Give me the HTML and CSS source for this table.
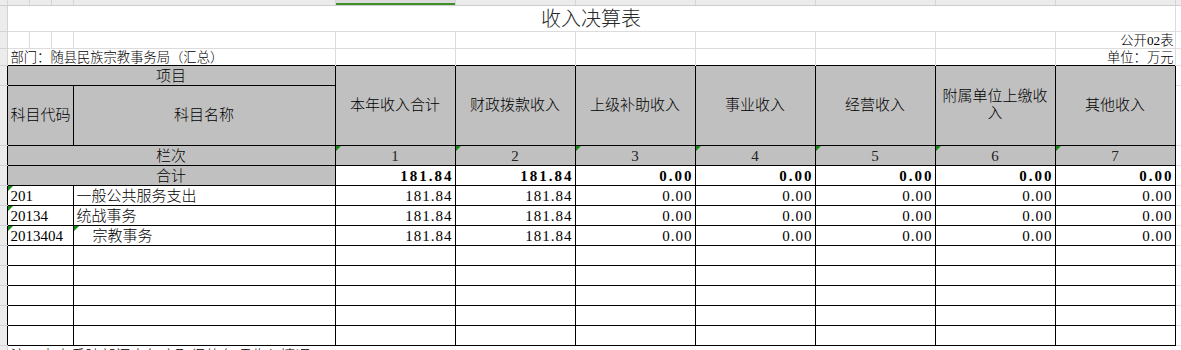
FILE: index.html
```html
<!DOCTYPE html>
<html lang="zh-CN">
<head>
<meta charset="utf-8">
<title>收入决算表</title>
<link rel="stylesheet" href="styles.css">
</head>
<body>
<table class="sheet">
<colgroup>
<col class="c-rh"><col class="c-s"><col class="c-s"><col class="c-s"><col class="c-d">
<col class="c-n"><col class="c-n"><col class="c-n"><col class="c-n"><col class="c-n"><col class="c-n"><col class="c-n">
<col class="c-gut">
</colgroup>
<tbody>
<tr class="r-top">
<td class="hd"></td><td class="hd"></td><td class="hd"></td><td class="hd"></td><td class="hd"></td>
<td class="hd active"></td><td class="hd"></td><td class="hd"></td><td class="hd"></td><td class="hd"></td><td class="hd"></td><td class="hd"></td>
<td class="hd"></td>
</tr>
<tr class="r-title">
<td class="rh"></td><td class="g title" colspan="11">收入决算表</td><td class="gut"></td>
</tr>
<tr class="r-info">
<td class="rh"></td><td class="g"></td><td class="g"></td><td class="g"></td><td class="g"></td>
<td class="g"></td><td class="g"></td><td class="g"></td><td class="g"></td><td class="g"></td><td class="g"></td>
<td class="g info">公开02表</td><td class="gut"></td>
</tr>
<tr class="r-info">
<td class="rh"></td><td class="g nb info dept" colspan="4">部门：随县民族宗教事务局（汇总）</td>
<td class="g nb"></td><td class="g nb"></td><td class="g nb"></td><td class="g nb"></td><td class="g nb"></td><td class="g nb"></td>
<td class="g nb info">单位：万元</td><td class="gut"></td>
</tr>
<tr class="r-h1">
<td class="rh in"></td><td class="t h c" colspan="4">项目</td>
<td class="t h c mid wrap" rowspan="2">本年收入合计</td>
<td class="t h c mid wrap" rowspan="2">财政拨款收入</td>
<td class="t h c mid wrap" rowspan="2">上级补助收入</td>
<td class="t h c mid wrap" rowspan="2">事业收入</td>
<td class="t h c mid wrap" rowspan="2">经营收入</td>
<td class="t h c mid wrap" rowspan="2">附属单位上缴收入</td>
<td class="t h c mid wrap" rowspan="2">其他收入</td>
<td class="gut"></td>
</tr>
<tr class="r-h2">
<td class="rh in"></td><td class="t h c mid" colspan="3">科目代码</td><td class="t h c mid">科目名称</td><td class="gut"></td>
</tr>
<tr class="r">
<td class="rh in"></td><td class="t h c" colspan="4">栏次</td>
<td class="t h c num tri">1</td><td class="t h c num tri">2</td><td class="t h c num tri">3</td><td class="t h c num tri">4</td>
<td class="t h c num tri">5</td><td class="t h c num tri">6</td><td class="t h c num tri">7</td><td class="gut"></td>
</tr>
<tr class="r">
<td class="rh in"></td><td class="t h c" colspan="4">合计</td>
<td class="t n b">181.84</td><td class="t n b">181.84</td><td class="t n b">0.00</td><td class="t n b">0.00</td>
<td class="t n b">0.00</td><td class="t n b">0.00</td><td class="t n b">0.00</td><td class="gut"></td>
</tr>
<tr class="r">
<td class="rh in"></td><td class="t code tri" colspan="3">201</td><td class="t name">一般公共服务支出</td>
<td class="t n">181.84</td><td class="t n">181.84</td><td class="t n">0.00</td><td class="t n">0.00</td>
<td class="t n">0.00</td><td class="t n">0.00</td><td class="t n">0.00</td><td class="gut"></td>
</tr>
<tr class="r">
<td class="rh in"></td><td class="t code tri" colspan="3">20134</td><td class="t name">统战事务</td>
<td class="t n">181.84</td><td class="t n">181.84</td><td class="t n">0.00</td><td class="t n">0.00</td>
<td class="t n">0.00</td><td class="t n">0.00</td><td class="t n">0.00</td><td class="gut"></td>
</tr>
<tr class="r">
<td class="rh in"></td><td class="t code tri" colspan="3">2013404</td><td class="t name sub tri">宗教事务</td>
<td class="t n">181.84</td><td class="t n">181.84</td><td class="t n">0.00</td><td class="t n">0.00</td>
<td class="t n">0.00</td><td class="t n">0.00</td><td class="t n">0.00</td><td class="gut"></td>
</tr>
<tr class="r">
<td class="rh in"></td><td class="t" colspan="3"></td><td class="t"></td>
<td class="t"></td><td class="t"></td><td class="t"></td><td class="t"></td><td class="t"></td><td class="t"></td><td class="t"></td><td class="gut"></td>
</tr>
<tr class="r">
<td class="rh in"></td><td class="t" colspan="3"></td><td class="t"></td>
<td class="t"></td><td class="t"></td><td class="t"></td><td class="t"></td><td class="t"></td><td class="t"></td><td class="t"></td><td class="gut"></td>
</tr>
<tr class="r">
<td class="rh in"></td><td class="t" colspan="3"></td><td class="t"></td>
<td class="t"></td><td class="t"></td><td class="t"></td><td class="t"></td><td class="t"></td><td class="t"></td><td class="t"></td><td class="gut"></td>
</tr>
<tr class="r">
<td class="rh in"></td><td class="t" colspan="3"></td><td class="t"></td>
<td class="t"></td><td class="t"></td><td class="t"></td><td class="t"></td><td class="t"></td><td class="t"></td><td class="t"></td><td class="gut"></td>
</tr>
<tr class="r">
<td class="rh in"></td><td class="t" colspan="3"></td><td class="t"></td>
<td class="t"></td><td class="t"></td><td class="t"></td><td class="t"></td><td class="t"></td><td class="t"></td><td class="t"></td><td class="gut"></td>
</tr>
<tr class="r">
<td class="rh"></td><td class="g note" colspan="11">注：本表反映部门本年度取得的各项收入情况。</td><td class="gut"></td>
</tr>
</tbody>
</table>
</body>
</html>
```

FILE: styles.css
```css
html, body {
  margin: 0;
  padding: 0;
}

body {
  width: 1181px;
  height: 350px;
  overflow: hidden;
  background: #ffffff;
  color: #000000;
  font-family: "Liberation Serif", "Noto Sans CJK SC", serif;
  font-size: 15px;
  font-weight: 300;
}

.sheet {
  border-collapse: collapse;
  table-layout: fixed;
  width: 1181px;
}

.c-rh { width: 7px; }
.c-s { width: 22px; }
.c-d { width: 262px; }
.c-n { width: 120px; }
.c-gut { width: 6px; }

td {
  padding: 0 3px 1px;
  vertical-align: bottom;
  line-height: 16px;
  white-space: nowrap;
  overflow: visible;
}

/* row heights */
.r-top { height: 5px; }
.r-title { height: 26px; }
.r-info { height: 17px; }
.r-h1 { height: 20px; }
.r-h2 { height: 60px; }
.r { height: 20px; }

/* column header strip */
.hd {
  padding: 0;
  font-size: 0;
  line-height: 0;
  background: #ececec;
  border-right: 1px solid #d6d6d6;
  border-bottom: 1px solid #cdcdcd;
}

.hd.active {
  background: #dcdcdc;
  box-shadow: inset 0 -2px 0 #3e8e2c;
}

/* row header strip */
.rh {
  padding: 0;
  background: #ececec;
  border-right: 1px solid #d3d3d3;
  border-bottom: 1px solid #d3d3d3;
}

.rh.in {
  border-right: none;
}

/* plain grid cells */
.g {
  border-right: 1px solid #dcdcdc;
  border-bottom: 1px solid #dcdcdc;
}

.g.nb {
  border-bottom: none;
}

.gut {
  padding: 0;
  border-bottom: 1px solid #e2e2e2;
}

.title {
  text-align: center;
  font-size: 20px;
  line-height: 22px;
  color: #262626;
  padding-bottom: 1px;
}

.info {
  font-size: 13.3px;
  line-height: 15px;
  text-align: right;
  padding-right: 1px;
  padding-bottom: 0;
}

.info.dept {
  text-align: left;
  padding-left: 3px;
}

/* table cells */
.t {
  border: 1px solid #000000;
}

.h {
  background: #c0c0c0;
}

.c {
  text-align: center;
}

.mid {
  vertical-align: middle;
  padding-bottom: 0;
}

.wrap {
  white-space: normal;
  line-height: 17px;
}

.num {
  color: #222222;
}

.n {
  text-align: right;
  letter-spacing: 1px;
  padding-right: 2px;
}

.n.b {
  font-weight: 700;
  letter-spacing: 2px;
  padding-right: 1px;
}

.code {
  padding-left: 3px;
}

.name {
  padding-left: 3px;
}

.name.sub {
  padding-left: 19px;
}

.tri {
  position: relative;
}

.tri::before {
  content: "";
  position: absolute;
  left: 0;
  top: 0;
  border-top: 5px solid #138a13;
  border-right: 5px solid transparent;
}

.note {
  border-right: none;
  border-bottom: none;
}
```
